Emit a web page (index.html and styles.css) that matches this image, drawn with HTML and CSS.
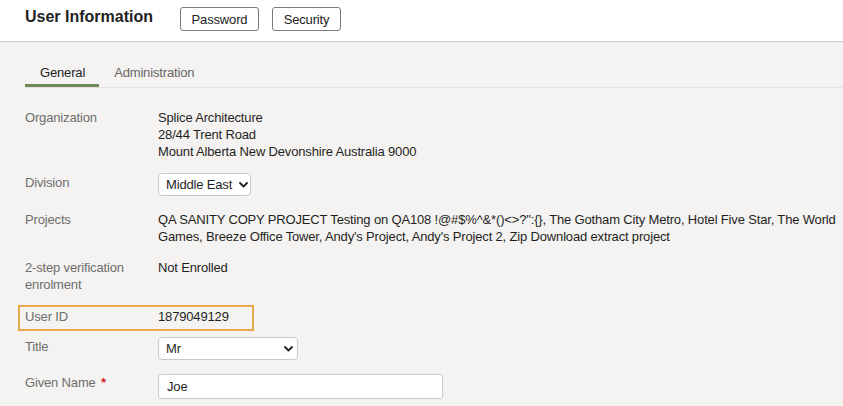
FILE: index.html
```html
<!DOCTYPE html>
<html lang="en">
<head>
<meta charset="utf-8">
<title>User Information</title>
<link rel="stylesheet" href="styles.css">
</head>
<body>
<header class="topbar">
  <h1 class="title">User Information</h1>
  <button class="btn">Password</button>
  <button class="btn btn-security">Security</button>
</header>
<nav class="tabs">
  <span class="tab tab-active">General</span>
  <span class="tab">Administration</span>
</nav>
<main class="form">
  <div class="row row-org">
    <div class="label">Organization</div>
    <div class="value">Splice Architecture<br>28/44 Trent Road<br>Mount Alberta New Devonshire Australia 9000</div>
  </div>
  <div class="row row-division">
    <div class="label label-ctrl">Division</div>
    <div class="value">
      <div class="select select-division">
        <span>Middle East</span>
        <svg class="chev" width="9" height="6" viewBox="0 0 9 6"><path d="M1 1 L4.5 4.5 L8 1" fill="none" stroke="#222" stroke-width="1.8" stroke-linecap="round" stroke-linejoin="round"/></svg>
      </div>
    </div>
  </div>
  <div class="row row-projects">
    <div class="label">Projects</div>
    <div class="value">QA SANITY COPY PROJECT Testing on QA108 !@#$%^&amp;*()&lt;&gt;?":{}, The Gotham City Metro, Hotel Five Star, The World Games, Breeze Office Tower, Andy's Project, Andy's Project 2, Zip Download extract project</div>
  </div>
  <div class="row row-2fa">
    <div class="label">2-step verification<br>enrolment</div>
    <div class="value">Not Enrolled</div>
  </div>
  <div class="row row-userid">
    <div class="label">User ID</div>
    <div class="value">1879049129</div>
  </div>
  <div class="row row-title">
    <div class="label label-ctrl">Title</div>
    <div class="value">
      <div class="select select-title">
        <span>Mr</span>
        <svg class="chev" width="9" height="6" viewBox="0 0 9 6"><path d="M1 1 L4.5 4.5 L8 1" fill="none" stroke="#222" stroke-width="1.8" stroke-linecap="round" stroke-linejoin="round"/></svg>
      </div>
    </div>
  </div>
  <div class="row row-given">
    <div class="label label-ctrl">Given Name <span class="req">*</span></div>
    <div class="value">
      <input class="input" type="text" value="Joe">
    </div>
  </div>
</main>
</body>
</html>
```
FILE: styles.css
```css
* { box-sizing: border-box; }
html, body { margin: 0; padding: 0; }
body {
  background: #f4f3f1;
  font-family: "Liberation Sans", Arial, Helvetica, sans-serif;
  font-size: 13px;
  line-height: 17px;
  letter-spacing: -0.16px;
  color: #222;
  width: 843px;
  height: 406px;
  overflow: hidden;
}
.topbar {
  height: 42px;
  background: #fff;
  border-bottom: 1px solid #c9c9c9;
  display: flex;
  align-items: flex-start;
  padding-left: 25px;
}
.title {
  margin: 0;
  font-size: 16px;
  font-weight: bold;
  line-height: 20px;
  letter-spacing: 0;
  padding-top: 7px;
  color: #222;
  margin-right: 27px;
}
.btn {
  margin-top: 7px;
  height: 24px;
  padding: 0;
  background: #fff;
  border: 1px solid #7a7a7a;
  border-radius: 3px;
  font-family: inherit;
  font-size: 13px;
  letter-spacing: -0.16px;
  color: #222;
  width: 79px;
}
.btn-security {
  margin-left: 13px;
  width: 69px;
}
.tabs {
  margin: 22px 0 0 25px;
  border-bottom: 1px solid #e4e3e1;
  display: flex;
}
.tab {
  padding: 0 15px 3px;
  border-bottom: 3px solid transparent;
  color: #666;
}
.tab-active {
  color: #222;
  border-bottom-color: #6b8a58;
  padding-right: 14px;
}
.form {
  padding: 21px 0 0 25px;
  display: flex;
  flex-direction: column;
}
.row {
  display: grid;
  grid-template-columns: 133px 1fr;
}
.label { color: #6d6d6d; }
.value { color: #1f1f1f; }
.row-division { margin-top: 13px; }
.row-projects { margin-top: 14.5px; }
.row-2fa { margin-top: 14px; }
.row-userid {
  margin-top: 12.5px;
  margin-left: -7px;
  width: 236px;
  border: 2px solid #e8a94b;
  padding: 0.5px 0 4px 5px;
  grid-template-columns: 133px 1fr;
}
.row-title { margin-top: 6.5px; }
.row-given { margin-top: 13.5px; }
.label-ctrl { padding-top: 0.5px; }
.select {
  display: inline-flex;
  align-items: center;
  justify-content: space-between;
  white-space: nowrap;
  height: 23px;
  background: #fff;
  border: 1px solid #c9c9c9;
  border-radius: 4px;
  padding: 0 2px 0 7px;
  font-size: 13px;
  color: #1f1f1f;
}
.select-division { width: 93px; }
.select-title { width: 140px; padding-right: 4px; }
.chev { display: block; margin-top: 1px; flex: none; }
.req { color: #c8281e; font-weight: bold; margin-left: 2px; }
.input {
  display: block;
  width: 285px;
  height: 25px;
  background: #fff;
  border: 1px solid #c9c9c9;
  border-radius: 3px;
  padding: 0 8px;
  font-family: inherit;
  font-size: 13px;
  letter-spacing: -0.16px;
  color: #1f1f1f;
  outline: none;
}
```
